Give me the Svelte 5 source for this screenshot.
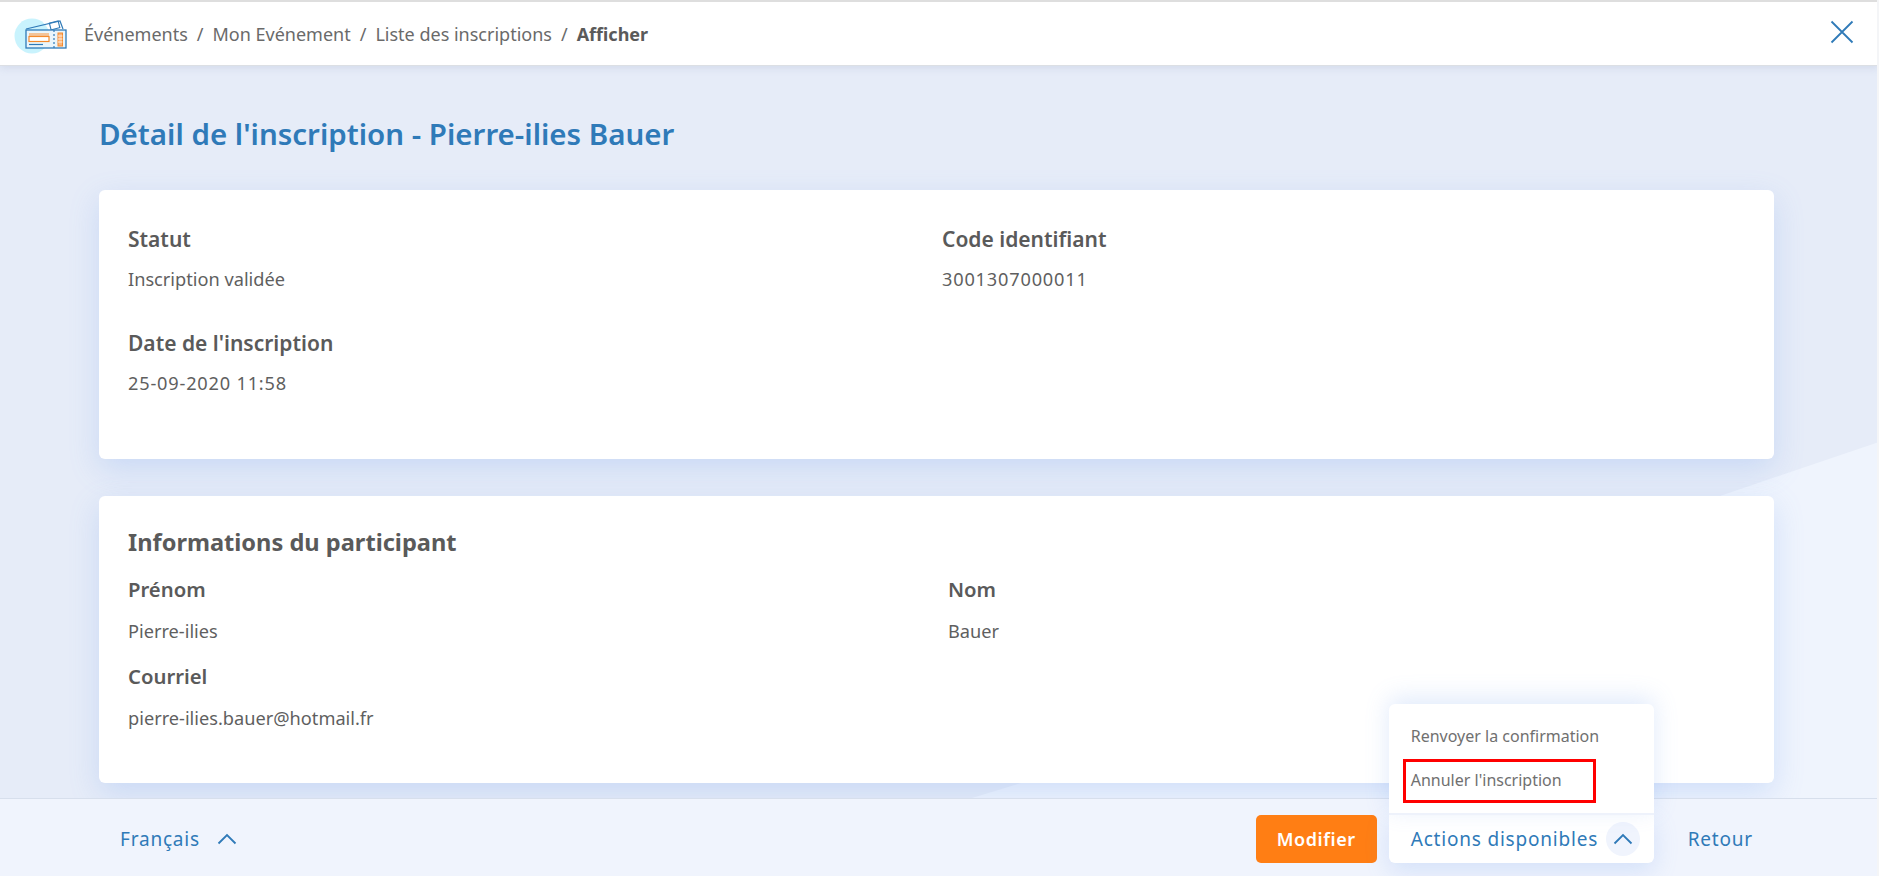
<script>
  const crumbs = ['Événements', 'Mon Evénement', 'Liste des inscriptions'];
</script>

<div class="page">
  <div class="backdrop"></div>

  <header class="topbar">
    <div class="crumbs">
      <svg class="logo" width="56" height="40" viewBox="0 0 56 40" aria-hidden="true">
        <circle cx="19" cy="20" r="17.5" fill="#c9f3fd" />
        <path d="M13 13 L47 5 L50 13" fill="none" stroke="#2f7ab8" stroke-width="1.2" />
        <rect x="37" y="6" width="9" height="7" fill="none" stroke="#2f7ab8" stroke-width="1.1" transform="rotate(-14 41 9)" />
        <rect x="13" y="14" width="40" height="18" fill="#e9f5fb" stroke="#2f7ab8" stroke-width="1.3" />
        <rect x="16" y="17" width="20" height="3" fill="#f3c49a" />
        <rect x="16" y="20.5" width="20" height="5" fill="#fff" stroke="#f58a2c" stroke-width="1.2" />
        <path d="M16 28.5 H30" stroke="#2f7ab8" stroke-width="1.2" />
        <path d="M41 14 V32" stroke="#2f7ab8" stroke-width="1.2" stroke-dasharray="2 2" />
        <rect x="45" y="17" width="4.5" height="13" fill="#fbb67c" stroke="#f58a2c" stroke-width="1" />
        <path d="M45 20 H49.500 M45 23 H49.500 M45 26 H49.500" stroke="#fff" stroke-width="0.8" />
      </svg>
      {#each crumbs as c}
        <span>{c}</span><span class="sep">/</span>
      {/each}
      <strong>Afficher</strong>
    </div>
    <button class="close" aria-label="Fermer">
      <svg width="24" height="24" viewBox="0 0 24 24"><path d="M1.500 1.500 L22.500 22.500 M22.500 1.500 L1.500 22.500" fill="none" stroke="#2f7ab8" stroke-width="1.800" /></svg>
    </button>
  </header>

  <main class="content">
    <h1>Détail de l'inscription - Pierre-ilies Bauer</h1>

    <section class="card first">
      <div class="grid status">
        <div class="field">
          <h3>Statut</h3>
          <p>Inscription validée</p>
        </div>
        <div class="field">
          <h3>Code identifiant</h3>
          <p class="num">3001307000011</p>
        </div>
        <div class="field">
          <h3>Date de l'inscription</h3>
          <p class="num">25-09-2020 11:58</p>
        </div>
      </div>
    </section>

    <section class="card second">
      <h2>Informations du participant</h2>
      <div class="grid person">
        <div class="field">
          <h3>Prénom</h3>
          <p>Pierre-ilies</p>
        </div>
        <div class="field">
          <h3>Nom</h3>
          <p>Bauer</p>
        </div>
        <div class="field">
          <h3>Courriel</h3>
          <p>pierre-ilies.bauer@hotmail.fr</p>
        </div>
      </div>
    </section>
  </main>

  <footer class="bottombar">
    <button class="lang">
      Français
      <svg width="20" height="12" viewBox="0 0 20 12"><path d="M1.500 10.500 L10 2 L18.500 10.500" fill="none" stroke="#2f7ab8" stroke-width="1.800" /></svg>
    </button>
    <div class="actions-row">
      <button class="primary">Modifier</button>
      <div class="actions">
        <div class="menu">
          <a href="#renvoyer">Renvoyer la confirmation</a>
          <a href="#annuler" class="marked">Annuler l'inscription</a>
        </div>
        <button class="toggle">
          Actions disponibles
          <span class="chev">
            <svg width="20" height="12" viewBox="0 0 20 12"><path d="M1.500 10.500 L10 2 L18.500 10.500" fill="none" stroke="#2f7ab8" stroke-width="1.800" /></svg>
          </span>
        </button>
      </div>
      <button class="back">Retour</button>
    </div>
  </footer>
  <div class="edge"></div>
</div>

<style>
  :global(body) {
    margin: 0;
    font-family: "Noto Sans", "Open Sans", sans-serif;
    color: #5a5a5a;
    overflow: hidden;
  }
  .page {
    position: relative;
    height: 100vh;
    display: flex;
    flex-direction: column;
    background: #e6ecf8;
    overflow: hidden;
  }
  .backdrop {
    position: absolute;
    inset: 0;
    background: #eff4fd;
    clip-path: polygon(1879px 442px, 1720px 496px, 1021px 783px, 972px 798px, 1879px 798px);
  }
  .edge {
    position: absolute;
    top: 0;
    right: 0;
    bottom: 0;
    width: 2px;
    background: #f4f5f7;
    z-index: 4;
  }
  .topbar {
    position: relative;
    height: 63px;
    flex: none;
    display: flex;
    align-items: center;
    justify-content: space-between;
    background: #fff;
    border-top: 2px solid #dedede;
    border-bottom: 1px solid #dcdfe4;
    box-shadow: 0 2px 8px rgba(120, 140, 180, 0.18);
    padding: 0 25px 0 13px;
    z-index: 2;
  }
  .crumbs {
    display: flex;
    align-items: center;
    font-size: 18px;
    color: #6a6a6a;
  }
  .logo {
    margin-top: 4px;
    margin-right: 15px;
  }
  .sep {
    margin: 0 9px;
  }
  .crumbs strong {
    font-weight: 700;
    color: #5a5a5a;
  }
  .close {
    background: none;
    border: 0;
    padding: 0;
    height: 24px;
    margin-bottom: 3px;
  }
  .content {
    position: relative;
    flex: 1;
    min-height: 0;
    padding: 0 105px 0 99px;
  }
  h1 {
    margin: 48px 0 36px;
    font-size: 29.5px;
    line-height: 40px;
    font-weight: 600;
    color: #2f7ab8;
  }
  .card {
    background: #fff;
    border-radius: 6px;
    box-shadow: 0 10px 30px rgba(100, 150, 235, 0.22);
    padding: 0 29px;
  }
  .first {
    height: 269px;
    padding-top: 35px;
    box-sizing: border-box;
    margin-bottom: 37px;
  }
  .second {
    height: 287px;
    padding-top: 31px;
    box-sizing: border-box;
  }
  .grid {
    display: grid;
  }
  .status {
    grid-template-columns: 814px 1fr;
    row-gap: 38px;
  }
  .person {
    grid-template-columns: 820px 1fr;
    row-gap: 19px;
  }
  .field h3 {
    margin: 0;
    font-size: 20.3px;
    line-height: 28px;
    font-weight: 600;
    color: #5a5a5a;
  }
  .status .field h3 {
    font-size: 21px;
  }
  .field p {
    margin: 0;
    font-size: 18.2px;
    line-height: 24px;
    color: #5f5f5f;
  }
  .field p.num {
    letter-spacing: 0.8px;
  }
  .status .field p {
    margin-top: 14px;
  }
  .person .field p {
    margin-top: 16px;
  }
  h2 {
    margin: 0 0 18px;
    font-size: 23.600px;
    line-height: 30px;
    font-weight: 700;
    color: #5a5a5a;
  }
  .bottombar {
    position: relative;
    height: 75px;
    flex: none;
    display: flex;
    align-items: center;
    justify-content: space-between;
    background: #f0f4fd;
    border-top: 1px solid #d7dfec;
    padding: 2px 126px 0 120px;
    z-index: 3;
  }
  button {
    font: inherit;
    cursor: pointer;
  }
  .lang,
  .back,
  .toggle {
    background: none;
    border: 0;
    padding: 0;
    color: #2f7ab8;
    font-size: 19px;
    letter-spacing: 0.8px;
    display: flex;
    align-items: center;
  }
  .lang svg {
    margin-left: 17px;
  }
  .actions-row {
    display: flex;
    align-items: center;
  }
  .primary {
    width: 121px;
    height: 48px;
    margin-right: 12px;
    background: #ff7e14;
    color: #fff;
    border: 0;
    border-radius: 5px;
    font-size: 18px;
    font-weight: 600;
    letter-spacing: 0.6px;
  }
  .actions {
    position: relative;
    width: 265px;
    height: 48px;
    background: #fff;
    border-radius: 0 0 6px 6px;
    box-shadow: 0 8px 24px rgba(100, 150, 235, 0.2);
    margin-right: 34px;
  }
  .toggle {
    height: 100%;
    width: 100%;
    box-sizing: border-box;
    padding-left: 22px;
    white-space: nowrap;
  }
  .chev {
    width: 34px;
    height: 34px;
    margin-left: 8px;
    flex: none;
    border-radius: 50%;
    background: #f0f4fd;
    display: flex;
    align-items: center;
    justify-content: center;
  }
  .menu {
    position: absolute;
    left: 0;
    right: 0;
    bottom: 100%;
    height: 111px;
    box-sizing: border-box;
    padding-top: 11px;
    background: #fff;
    border-radius: 6px 6px 0 0;
    border-bottom: 2px solid #eef2fb;
    box-shadow: 0 -6px 24px rgba(100, 150, 235, 0.2);
  }
  .menu a {
    display: block;
    height: 44px;
    line-height: 43px;
    padding-left: 22px;
    font-size: 16px;
    color: #707070;
    text-decoration: none;
  }
  .marked {
    position: relative;
  }
  .marked::after {
    content: "";
    position: absolute;
    left: 14px;
    top: 0;
    width: 193px;
    height: 44px;
    box-sizing: border-box;
    border: 3px solid #f00;
  }
</style>
